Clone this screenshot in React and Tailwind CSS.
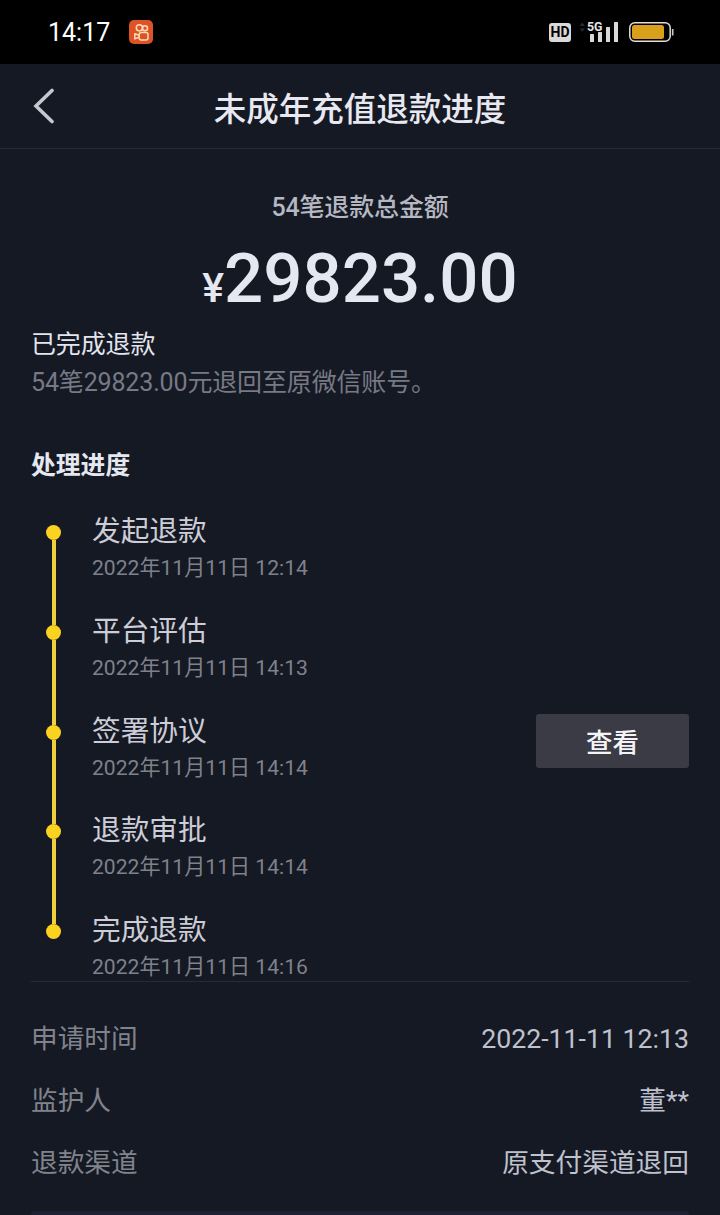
const steps = [
  { title: "发起退款", time: "2022年11月11日 12:14" },
  { title: "平台评估", time: "2022年11月11日 14:13" },
  { title: "签署协议", time: "2022年11月11日 14:14", action: "查看" },
  { title: "退款审批", time: "2022年11月11日 14:14" },
  { title: "完成退款", time: "2022年11月11日 14:16" },
];

const details = [
  { label: "申请时间", value: "2022-11-11 12:13" },
  { label: "监护人", value: "董**" },
  { label: "退款渠道", value: "原支付渠道退回" },
];

const KuaishouIcon = () => (
  <svg className="h-6 w-6" viewBox="0 0 24 24" fill="none" aria-hidden="true">
    <rect width="24" height="24" rx="5" fill="#dd5326" />
    <g stroke="#fbdcb8" strokeWidth="1.5" strokeLinejoin="round">
      <circle cx="10.4" cy="7.8" r="3.1" />
      <circle cx="16" cy="8.3" r="2.5" />
      <rect x="10.2" y="12.6" width="8.8" height="7.4" rx="2" />
      <path d="M10 15.3 5.8 13.7v5.2l4.2-1.6" />
    </g>
  </svg>
);

const SignalIcon = () => (
  <svg className="h-8 w-10" viewBox="0 0 40 32" aria-hidden="true">
    <path d="m.5 10 2.8-3.5L6 10zM.5 12.5H6l-2.7 3z" fill="#2b2b2b" />
    <g fill="#d9d9db">
      <rect x="11" y="18" width="4" height="8" rx=".5" />
      <rect x="19" y="16" width="4" height="10" rx=".5" />
      <rect x="27" y="11" width="4" height="15" rx=".5" />
      <rect x="35" y="6" width="4" height="20" rx=".5" />
    </g>
    <text
      x="8"
      y="15"
      fill="#e4e4e6"
      stroke="#000"
      strokeWidth="1.5"
      paintOrder="stroke"
      textLength="15.5"
      lengthAdjust="spacingAndGlyphs"
      className="font-['Roboto',sans-serif] text-[13.5px] font-bold"
    >
      5G
    </text>
  </svg>
);

const BatteryIcon = () => (
  <svg className="h-5 w-[46px]" viewBox="0 0 46 20" fill="none" aria-hidden="true">
    <rect x=".8" y=".8" width="40.4" height="18.4" rx="5" stroke="#e2dfd8" strokeWidth="1.5" />
    <rect x="3" y="3" width="32" height="14" rx="2.5" fill="#d9a01c" />
    <path d="M43.7 7v6.5" stroke="#c9c9c9" strokeWidth="1.6" />
  </svg>
);

function StatusBar() {
  return (
    <div className="flex h-16 items-center justify-between bg-black pr-[45px] pl-12 text-white">
      <div className="flex items-center gap-5">
        <span className="w-[61px] pt-px text-[25px] leading-8 whitespace-nowrap">14:17</span>
        <KuaishouIcon />
      </div>
      <div className="flex items-center">
        <span className="flex h-[19px] w-[22px] items-center justify-center rounded-[3px] bg-[#d9d9db] text-[14px] font-bold text-black">
          HD
        </span>
        <span className="mr-[10px] ml-2 flex">
          <SignalIcon />
        </span>
        <BatteryIcon />
      </div>
    </div>
  );
}

function Header() {
  return (
    <header className="flex h-[85px] items-center border-b border-[#292c36] px-8">
      <button type="button" aria-label="返回" className="w-7">
        <svg className="h-9 w-6" viewBox="0 0 24 36" fill="none">
          <path d="M20 2.5 4 18l16 15.5" stroke="#c6c7d0" strokeWidth="3.6" strokeLinecap="round" />
        </svg>
      </button>
      <h1 className="flex-1 pt-[7px] pr-7 text-center text-[32.5px] leading-10 font-medium text-[#e8e9f0]">
        未成年充值退款进度
      </h1>
    </header>
  );
}

function Step({ step, last }) {
  return (
    <li className="flex h-[99.8px]">
      <div className="flex w-[15px] flex-col items-center">
        <span className="size-[15px] shrink-0 rounded-full bg-[#fbd21f]" />
        {!last && <span className="w-1 flex-1 bg-[#efcf3c]" />}
      </div>
      <div className="-mt-[14px] ml-[31px] flex-1">
        <h3 className="text-[28.7px] leading-10 text-[#cccdd6]">{step.title}</h3>
        <p className="mt-px text-[21.1px] leading-8 text-[#7f818b]">{step.time}</p>
      </div>
      {step.action && (
        <button
          type="button"
          className="-mt-[11px] h-[54px] w-[153px] rounded-[3px] bg-[#3a3b44] pt-1 text-[26.5px] font-medium text-[#f4f4f8]"
        >
          {step.action}
        </button>
      )}
    </li>
  );
}

export default function App() {
  return (
    <div className="h-[1215px] w-[720px] overflow-hidden bg-[#151924] font-['Roboto','Noto_Sans_CJK_SC',sans-serif]">
      <StatusBar />
      <Header />
      <main className="px-[31px]">
        <section className="pt-[41px] text-center">
          <p className="text-[25px] leading-9 font-medium tracking-[-0.15px] text-[#b5b7c1]">
            54笔退款总金额
          </p>
          <p className="mt-[11px] text-[69px] leading-[84px] font-medium text-[#e6e8f1]">
            <span className="text-[41px]">¥</span>29823.00
          </p>
        </section>
        <section className="-mt-[4px] text-[25px] leading-[38px] tracking-[-0.15px]">
          <p className="text-[#e3e5ee]">已完成退款</p>
          <p className="text-[#777984]">54笔29823.00元退回至原微信账号。</p>
        </section>
        <h2 className="mt-[46px] text-[24.8px] leading-9 font-bold text-[#e6e8f0]">处理进度</h2>
        <ol className="mt-[41px] h-[457px] border-b border-[#292c36] pl-[15px]">
          {steps.map((step, i) => (
            <Step key={i} step={step} last={i === steps.length - 1} />
          ))}
        </ol>
        <dl className="mt-[26px] text-[26.7px] leading-[62px]">
          {details.map((item) => (
            <div key={item.label} className="flex justify-between">
              <dt className="text-[#81838c]">{item.label}</dt>
              <dd className="text-[#bfc1cc]">{item.value}</dd>
            </div>
          ))}
        </dl>
        <div className="mt-[17px] h-2 rounded-t-sm bg-[#1f2034]" />
      </main>
    </div>
  );
}
